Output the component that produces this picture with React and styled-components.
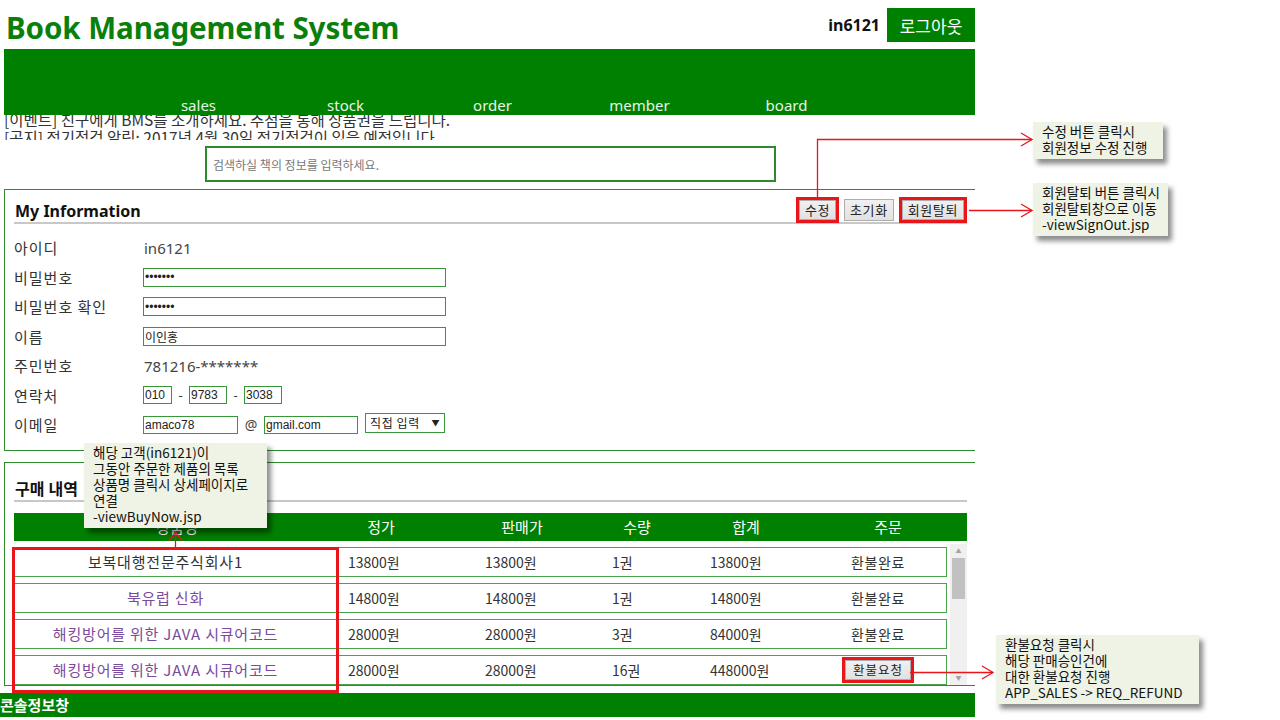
import React from "react";
import styled, { createGlobalStyle } from "styled-components";

const GREEN = "#008000";
const RED = "#e8161b";

const menus = ["sales", "stock", "order", "member", "board"];

const info = [
  { label: "아이디", type: "text", value: "in6121" },
  { label: "비밀번호", type: "password", value: "1234567" },
  { label: "비밀번호 확인", type: "password", value: "1234567" },
  { label: "이름", type: "input", value: "이인홍" },
  { label: "주민번호", type: "text", value: "781216-*******" },
  { label: "연락처", type: "phone" },
  { label: "이메일", type: "email" },
];

const orders = [
  { name: "보복대행전문주식회사1", price: "13800원", sale: "13800원", qty: "1권", total: "13800원", state: "환불완료", visited: false },
  { name: "북유럽 신화", price: "14800원", sale: "14800원", qty: "1권", total: "14800원", state: "환불완료", visited: true },
  { name: "해킹방어를 위한 JAVA 시큐어코드", price: "28000원", sale: "28000원", qty: "3권", total: "84000원", state: "환불완료", visited: true },
  { name: "해킹방어를 위한 JAVA 시큐어코드", price: "28000원", sale: "28000원", qty: "16권", total: "448000원", state: "request", visited: true },
];

const heads = [
  { title: "상품명", w: 326 },
  { title: "정가", w: 82 },
  { title: "판매가", w: 200 },
  { title: "수량", w: 30 },
  { title: "합계", w: 188 },
  { title: "주문", w: 96 },
];

function App() {
  return (
    <Page>
      <GlobalStyle />
      <Main>
        <Header>
          <Logo>Book Management System</Logo>
          <UserBox>
            <UserId>in6121</UserId>
            <LogoutButton>로그아웃</LogoutButton>
          </UserBox>
        </Header>

        <Nav>
          {menus.map((m) => (
            <NavItem key={m}>{m}</NavItem>
          ))}
        </Nav>

        <NoticeBox>
          <NoticeList>
            <li>[이벤트] 친구에게 BMS를 소개하세요. 추첨을 통해 상품권을 드립니다.</li>
            <li>[공지] 정기점검 알림: 2017년 4월 30일 정기점검이 있을 예정입니다.</li>
          </NoticeList>
        </NoticeBox>

        <SearchInput placeholder="검색하실 책의 정보를 입력하세요." />

        <Panel>
          <PanelHead>
            <PanelTitle>My Information</PanelTitle>
            <ButtonGroup>
              <Highlight><GrayButton $inner>수정</GrayButton></Highlight>
              <GrayButton>초기화</GrayButton>
              <Highlight><GrayButton $inner>회원탈퇴</GrayButton></Highlight>
            </ButtonGroup>
          </PanelHead>
          <InfoList>
            {info.map((row) => (
              <InfoRow key={row.label}>
                <Label>{row.label}</Label>
                {row.type === "text" && <Value>{row.value}</Value>}
                {(row.type === "password" || row.type === "input") && (
                  <TextBox
                    type={row.type === "password" ? "password" : "text"}
                    defaultValue={row.value}
                    $width={303}
                  />
                )}
                {row.type === "phone" && (
                  <Inline>
                    <TextBox defaultValue="010" $width={29} $height={18} />
                    <Sep>-</Sep>
                    <TextBox defaultValue="9783" $width={38} $height={18} />
                    <Sep>-</Sep>
                    <TextBox defaultValue="3038" $width={38} $height={18} />
                  </Inline>
                )}
                {row.type === "email" && (
                  <Inline>
                    <TextBox defaultValue="amaco78" $width={95} $height={18} />
                    <At>@</At>
                    <TextBox defaultValue="gmail.com" $width={94} $height={18} />
                    <FakeSelect>
                      직접 입력 <Caret>▼</Caret>
                    </FakeSelect>
                  </Inline>
                )}
              </InfoRow>
            ))}
          </InfoList>
        </Panel>

        <Panel $top={11}>
          <PanelHead $height={39}>
            <PanelTitle>구매 내역</PanelTitle>
          </PanelHead>
          <TableHead>
            {heads.map((h) => (
              <HeadCell key={h.title} $w={h.w}>{h.title}</HeadCell>
            ))}
          </TableHead>
          <ListArea>
            <RowList>
              {orders.map((o, i) => (
                <OrderRow key={i}>
                  <NameCell $visited={o.visited}>{o.name}</NameCell>
                  <Cell>{o.price}</Cell>
                  <Cell>{o.sale}</Cell>
                  <Cell>{o.qty}</Cell>
                  <Cell>{o.total}</Cell>
                  <StateCell>
                    {o.state === "request" ? (
                      <Highlight><GrayButton $small>환불요청</GrayButton></Highlight>
                    ) : (
                      o.state
                    )}
                  </StateCell>
                </OrderRow>
              ))}
            </RowList>
            <ScrollBar>
              <ScrollArrow>▲</ScrollArrow>
              <Thumb />
              <ScrollSpace />
              <ScrollArrow>▼</ScrollArrow>
            </ScrollBar>
          </ListArea>
        </Panel>
      </Main>

      <ConsoleBar>콘솔정보창</ConsoleBar>

      <NameFrame />

      <Note $left={1033} $top={122} $width={130}>
        수정 버튼 클릭시<br />회원정보 수정 진행
      </Note>
      <Note $left={1033} $top={183} $width={135}>
        회원탈퇴 버튼 클릭시<br />회원탈퇴창으로 이동<br />-viewSignOut.jsp
      </Note>
      <Note $left={84} $top={443} $width={183}>
        해당 고객(in6121)이<br />그동안 주문한 제품의 목록<br />상품명 클릭시 상세페이지로<br />연결<br />-viewBuyNow.jsp
      </Note>
      <Note $left={996} $top={635} $width={203}>
        환불요청 클릭시<br />해당 판매승인건에<br />대한 환불요청 진행<br />APP_SALES -&gt; REQ_REFUND
      </Note>

      <Arrows width="1280" height="720">
        <g stroke={RED} strokeWidth="1.3" fill="none">
          <path d="M817.5 197 V139.5 H1032" />
          <path d="M1021 133 L1032 139.5 L1021 146" />
          <path d="M969 210.5 H1032" />
          <path d="M1021 204 L1032 210.5 L1021 217" />
          <path d="M175.5 547 V532" />
          <path d="M169 541 L175.5 532 L182 541" />
          <path d="M910 672.5 H993" />
          <path d="M982 666 L993 672.5 L982 679" />
        </g>
      </Arrows>
    </Page>
  );
}

export default App;

const GlobalStyle = createGlobalStyle`
  body {
    margin: 0;
    background: #ffffff;
    font-family: "Noto Sans", "Noto Sans CJK KR", sans-serif;
    color: #333333;
  }
  * {
    box-sizing: border-box;
  }
`;

const Page = styled.div`
  position: relative;
  width: 1280px;
  height: 720px;
  overflow: hidden;
`;

const Main = styled.div`
  width: 975px;
  padding-left: 4px;
`;

const Header = styled.div`
  display: flex;
  justify-content: space-between;
  align-items: flex-start;
  height: 49px;
`;

const Logo = styled.h1`
  margin: 8px 0 0 2px;
  font-size: 29.6px;
  line-height: 40px;
  font-weight: 700;
  color: #0b7f0b;
  letter-spacing: -0.1px;
`;

const UserBox = styled.div`
  display: flex;
  align-items: center;
  margin-top: 8px;
`;

const UserId = styled.span`
  font-size: 16px;
  font-weight: 700;
  color: #111111;
  margin-right: 7px;
`;

const LogoutButton = styled.button`
  border: none;
  background: ${GREEN};
  color: #ffffff;
  font-family: "Noto Sans CJK KR", sans-serif;
  font-size: 17px;
  width: 88px;
  height: 34px;
  padding: 0;
`;

const Nav = styled.ul`
  position: relative;
  z-index: 2;
  display: flex;
  align-items: flex-end;
  margin: 0;
  padding: 0 0 0 121px;
  list-style: none;
  height: 66px;
  background: ${GREEN};
`;

const NavItem = styled.li`
  width: 147px;
  text-align: center;
  font-size: 15px;
  line-height: 20px;
  color: #e6f4e6;
`;

const NoticeBox = styled.div`
  height: 25px;
  overflow: hidden;
`;

const NoticeList = styled.ul`
  margin: -5px 0 0;
  padding: 0;
  list-style: none;
  font-family: "Noto Sans CJK KR", sans-serif;
  font-size: 15.5px;
  line-height: 18px;
  color: #333333;
  white-space: nowrap;
`;

const SearchInput = styled.input`
  display: block;
  margin: 6px 0 0 201px;
  width: 571px;
  height: 36px;
  border: 2px solid #2b8a2b;
  padding: 0 6px;
  font-family: "Noto Sans CJK KR", sans-serif;
  font-size: 12px;
  outline: none;
  &::placeholder {
    color: #777777;
  }
`;

const Panel = styled.section`
  margin-top: ${(p) => p.$top || 7}px;
  border: 1px solid #2e8b2e;
  border-right: none;
  padding: 0 8px 0 9px;
`;

const PanelHead = styled.div`
  display: flex;
  justify-content: space-between;
  align-items: flex-end;
  height: ${(p) => p.$height || 34}px;
  border-bottom: 2px solid #c8c8c8;
`;

const PanelTitle = styled.h2`
  margin: 0 0 0 1px;
  font-size: 16px;
  line-height: 22px;
  font-weight: 700;
  color: #111111;
`;

const ButtonGroup = styled.div`
  display: flex;
  align-items: center;
  gap: 5px;
  margin-bottom: -1px;
`;

const Highlight = styled.span`
  display: inline-flex;
  border: 3px solid ${RED};
`;

const GrayButton = styled.button`
  height: ${(p) => (p.$small ? 20 : p.$inner ? 20 : 22)}px;
  padding: 0 ${(p) => (p.$small ? 7 : 5)}px;
  border: 1px solid #adadad;
  background: linear-gradient(#f0f0f0, #e1e1e1);
  font-family: "Noto Sans CJK KR", sans-serif;
  font-size: ${(p) => (p.$small ? 12.5 : 13)}px;
  letter-spacing: ${(p) => (p.$small ? 1 : 0.6)}px;
  line-height: 16px;
  color: #222222;
`;

const InfoList = styled.div`
  padding: 9px 0 10px;
`;

const InfoRow = styled.div`
  display: flex;
  align-items: center;
  height: 29.5px;
`;

const Label = styled.span`
  width: 129px;
  font-family: "Noto Sans CJK KR", sans-serif;
  font-size: 15px;
  letter-spacing: 1px;
  color: #333333;
`;

const Value = styled.span`
  padding-left: 1px;
  font-size: 15px;
  color: #444444;
`;

const TextBox = styled.input`
  width: ${(p) => p.$width}px;
  height: ${(p) => p.$height || 19}px;
  border: 1px solid #3a963a;
  padding: 0 1px;
  font-family: "Liberation Sans", "Noto Sans CJK KR", sans-serif;
  font-size: 12px;
  color: #222222;
  outline: none;
`;

const Inline = styled.div`
  display: flex;
  align-items: center;
`;

const Sep = styled.span`
  width: 17px;
  text-align: center;
  font-size: 13px;
`;

const At = styled.span`
  width: 26px;
  text-align: center;
  font-size: 14px;
  color: #444444;
`;

const FakeSelect = styled.div`
  display: flex;
  align-items: center;
  justify-content: space-between;
  margin: -4px 0 0 7px;
  width: 80px;
  height: 20px;
  border: 1px solid #3a963a;
  padding: 0 4px;
  font-family: "Noto Sans CJK KR", sans-serif;
  font-size: 12px;
  letter-spacing: 0.6px;
  color: #222222;
`;

const Caret = styled.span`
  font-size: 8px;
`;

const TableHead = styled.div`
  display: flex;
  align-items: center;
  margin-top: 11px;
  height: 28px;
  background: ${GREEN};
`;

const HeadCell = styled.div`
  flex: 0 0 ${(p) => p.$w}px;
  text-align: center;
  white-space: nowrap;
  font-family: "Noto Sans CJK KR", sans-serif;
  font-size: 15px;
  color: #ffffff;
`;

const ListArea = styled.div`
  display: flex;
  gap: 3px;
  margin-top: 3px;
  height: 141px;
  overflow: hidden;
`;

const RowList = styled.div`
  display: flex;
  flex-direction: column;
  gap: 6px;
  width: 934px;
  padding-top: 3px;
`;

const OrderRow = styled.div`
  flex: 0 0 30px;
  display: grid;
  grid-template-columns: 325px 137px 127px 98px 108px 1fr;
  align-items: center;
  border: 1px solid #4aa54a;
  font-family: "Noto Sans CJK KR", sans-serif;
  font-size: 14px;
  color: #333333;
`;

const NameCell = styled.div`
  text-align: center;
  padding-right: 24px;
  font-size: 15px;
  letter-spacing: 0.8px;
  color: ${(p) => (p.$visited ? "#7a4a9c" : "#333333")};
`;

const Cell = styled.div`
  padding-left: 8px;
`;

const StateCell = styled.div`
  display: flex;
  justify-content: center;
  letter-spacing: 0.6px;
`;

const ScrollBar = styled.div`
  display: flex;
  flex-direction: column;
  align-items: center;
  width: 17px;
  background: #f0f0f0;
`;

const ScrollArrow = styled.div`
  height: 14px;
  font-size: 6px;
  line-height: 14px;
  color: #a3a3a3;
`;

const Thumb = styled.div`
  width: 13px;
  height: 41px;
  background: #c1c1c1;
`;

const ScrollSpace = styled.div`
  flex: 1;
`;

const ConsoleBar = styled.div`
  position: absolute;
  left: 0;
  top: 693px;
  width: 975px;
  height: 24px;
  background: ${GREEN};
  font-family: "Noto Sans CJK KR", sans-serif;
  font-size: 15px;
  font-weight: 700;
  line-height: 24px;
  color: #ffffff;
`;

const NameFrame = styled.div`
  position: absolute;
  left: 12px;
  top: 547px;
  width: 327px;
  height: 146px;
  border: 3px solid ${RED};
`;

const Note = styled.div`
  position: absolute;
  z-index: 3;
  left: ${(p) => p.$left}px;
  top: ${(p) => p.$top}px;
  width: ${(p) => p.$width}px;
  padding: 1px 4px 4px 9px;
  background: #eef3e5;
  box-shadow: 4px 5px 5px rgba(0, 0, 0, 0.45);
  font-family: "Noto Sans CJK KR", sans-serif;
  font-size: 13.5px;
  line-height: 16px;
  color: #111111;
  white-space: nowrap;
  overflow: hidden;
`;

const Arrows = styled.svg`
  position: absolute;
  z-index: 4;
  left: 0;
  top: 0;
  pointer-events: none;
`;
